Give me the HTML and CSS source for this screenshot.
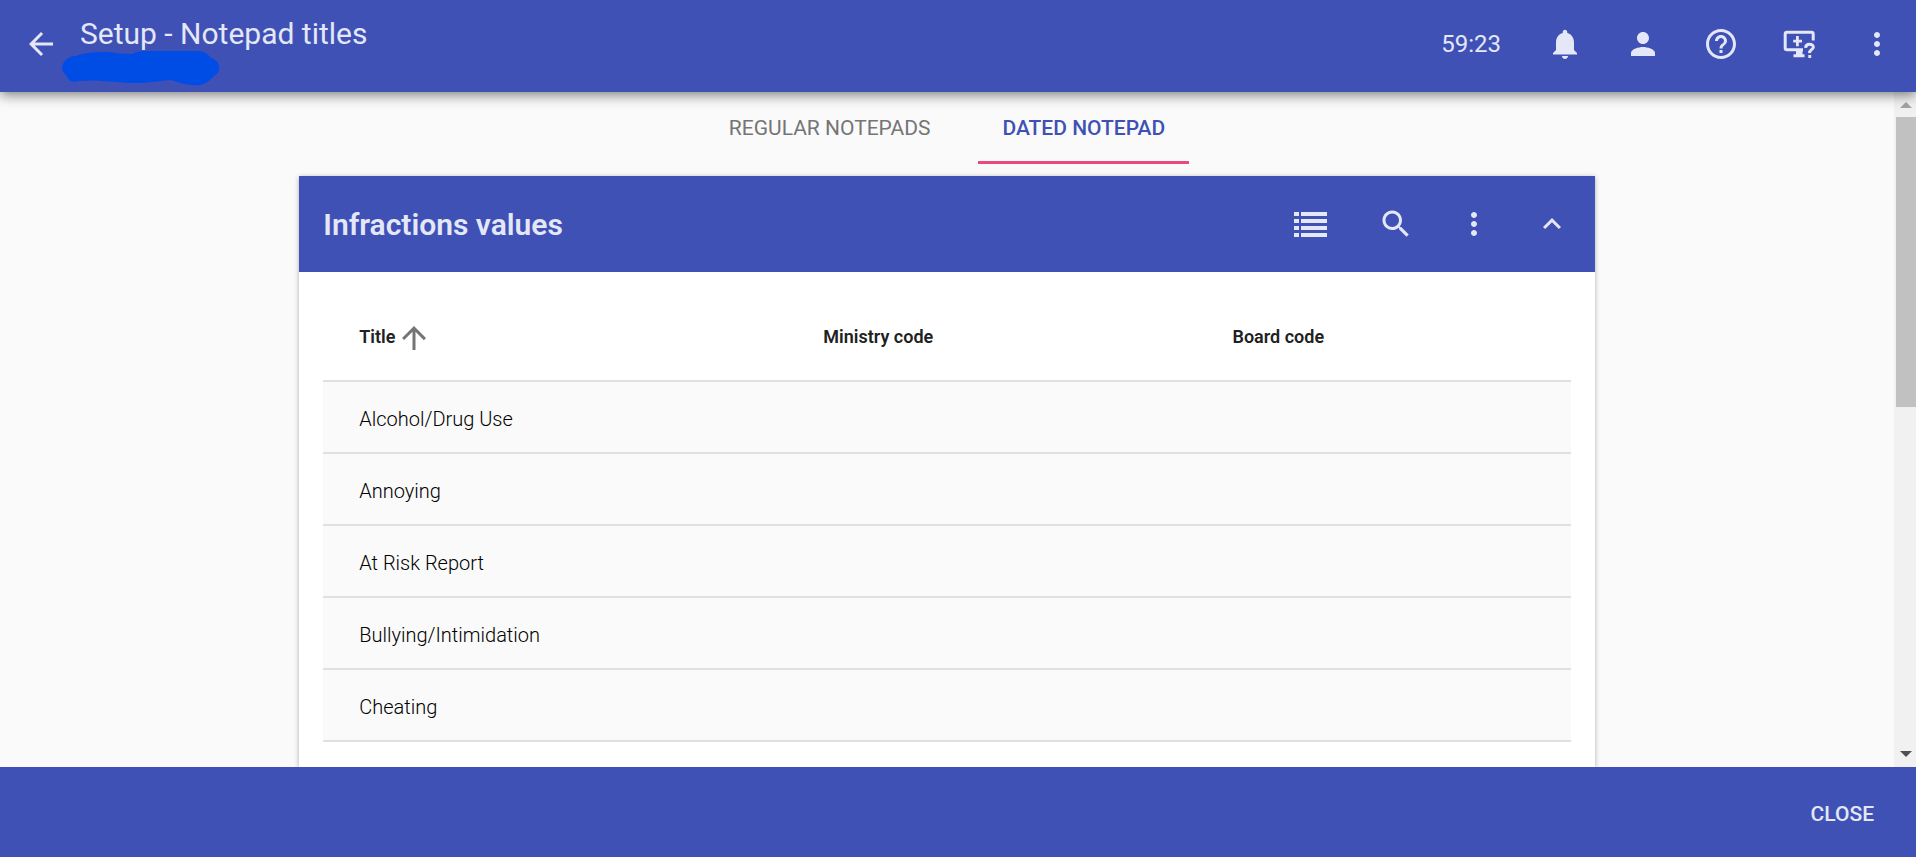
FILE: index.html
```html
<!DOCTYPE html>
<html lang="en">
<head>
<meta charset="utf-8">
<meta name="viewport" content="width=device-width, initial-scale=1">
<title>Setup - Notepad titles</title>
<link rel="stylesheet" href="styles.css">
</head>
<body>
<div class="app">
  <header class="topbar">
    <button class="icon-btn" type="button" aria-label="Back">
      <svg class="icon" viewBox="0 0 24 24"><path d="M20 11H7.83l5.59-5.59L12 4l-8 8 8 8 1.41-1.41L7.83 13H20v-2z"/></svg>
    </button>
    <div class="heading">
      <h1 class="page-title">Setup - Notepad titles</h1>
      <svg class="marker" viewBox="0 0 158 36" aria-hidden="true"><path d="M0 17C1 9 7 5 14 5C24 1 35 1 46 1C54 2 62 3 70 3C75 0 80 0 88 0H138C143 1 147 4 149 7C155 9 158 13 157 18C157 22 153 24 151 26C146 32 140 35 130 34C122 34 115 30 108 29C96 30 88 32 75 32C54 32 36 28 17 30C9 32 6 29 5 25C2 23 0 20 0 17Z"/></svg>
    </div>
    <span class="timer">59:23</span>
    <nav class="actions" aria-label="Account">
      <button class="icon-btn" type="button" aria-label="Notifications">
        <svg class="icon" viewBox="0 0 24 24"><path d="M12 22c1.100 0 2-.9 2-2h-4c0 1.100.89 2 2 2zm6-6v-5c0-3.070-1.640-5.640-4.500-6.320V4c0-.83-.67-1.500-1.500-1.500s-1.500.67-1.500 1.500v.68C7.630 5.360 6 7.920 6 11v5l-2 2v1h16v-1l-2-2z"/></svg>
      </button>
      <button class="icon-btn" type="button" aria-label="Profile">
        <svg class="icon" viewBox="0 0 24 24"><path d="M12 12c2.210 0 4-1.790 4-4s-1.790-4-4-4-4 1.790-4 4 1.790 4 4 4zm0 2c-2.670 0-8 1.340-8 4v2h16v-2c0-2.660-5.330-4-8-4z"/></svg>
      </button>
      <button class="icon-btn" type="button" aria-label="Help">
        <svg class="icon" viewBox="0 0 24 24"><path d="M11 18h2v-2h-2v2zm1-16C6.480 2 2 6.480 2 12s4.480 10 10 10 10-4.480 10-10S17.520 2 12 2zm0 18c-4.410 0-8-3.590-8-8s3.590-8 8-8 8 3.590 8 8-3.590 8-8 8zm0-14c-2.210 0-4 1.790-4 4h2c0-1.100.9-2 2-2s2 .9 2 2c0 2-3 1.750-3 5h2c0-2.250 3-2.500 3-5 0-2.210-1.790-4-4-4z"/></svg>
      </button>
      <button class="icon-btn" type="button" aria-label="Remote support">
        <svg class="icon" viewBox="0 0 36 36">
          <path class="stroke" d="M22 23.800H6Q4.200 23.800 4.200 22V8Q4.200 6.200 6 6.200H30.500Q32.200 6.200 32.200 8V14.500"/>
          <path d="M15 24.500H21.500V28.300H23.500V31.300H12.500V28.300H15ZM12.200 13.700H15V10H17.800V13.700H21V16.500H17.800V20.200H15V16.500H12.200Z"/>
          <path class="stroke" d="M24.600 21.800Q24.800 18.300 28.600 18.300T32.300 21.300Q32.300 22.600 30.400 23.800T28.700 27.200"/>
          <path d="M27.300 29H30.200V32H27.300Z"/>
        </svg>
      </button>
      <button class="icon-btn" type="button" aria-label="More options">
        <svg class="icon" viewBox="0 0 24 24"><path d="M12 8c1.100 0 2-.9 2-2s-.9-2-2-2-2 .9-2 2 .9 2 2 2zm0 2c-1.100 0-2 .9-2 2s.9 2 2 2 2-.9 2-2-.9-2-2-2zm0 6c-1.100 0-2 .9-2 2s.9 2 2 2 2-.9 2-2-.9-2-2-2z"/></svg>
      </button>
    </nav>
  </header>

  <div class="body">
    <main class="content">
      <nav class="tabs" aria-label="Notepads">
        <a class="tab" href="#regular">REGULAR NOTEPADS</a>
        <a class="tab tab-active" href="#dated" aria-current="page">DATED NOTEPAD</a>
      </nav>
      <section class="card">
        <div class="card-head">
          <h2 class="card-title">Infractions values</h2>
          <div class="actions">
            <button class="icon-btn icon-btn-wide" type="button" aria-label="List view">
              <svg class="icon" viewBox="0 0 36 36"><path d="M1 6H6V10H1ZM8 6H34V10H8ZM1 13H6V17H1ZM8 13H34V17H8ZM1 20H6V24H1ZM8 20H34V24H8ZM1 27H6V31H1ZM8 27H34V31H8Z"/></svg>
            </button>
            <button class="icon-btn" type="button" aria-label="Search">
              <svg class="icon" viewBox="0 0 24 24"><path d="M15.500 14h-.79l-.28-.27C15.410 12.590 16 11.110 16 9.500 16 5.910 13.090 3 9.500 3S3 5.910 3 9.500 5.910 16 9.500 16c1.610 0 3.090-.59 4.230-1.570l.27.28v.79l5 4.990L20.490 19l-4.990-5zm-6 0C7.010 14 5 11.990 5 9.500S7.010 5 9.500 5 14 7.010 14 9.500 11.990 14 9.500 14z"/></svg>
            </button>
            <button class="icon-btn" type="button" aria-label="More options">
              <svg class="icon" viewBox="0 0 24 24"><path d="M12 8c1.100 0 2-.9 2-2s-.9-2-2-2-2 .9-2 2 .9 2 2 2zm0 2c-1.100 0-2 .9-2 2s.9 2 2 2 2-.9 2-2-.9-2-2-2zm0 6c-1.100 0-2 .9-2 2s.9 2 2 2 2-.9 2-2-.9-2-2-2z"/></svg>
            </button>
            <button class="icon-btn" type="button" aria-label="Collapse">
              <svg class="icon" viewBox="0 0 24 24"><path d="M12 8l-6 6 1.410 1.410L12 10.830l4.590 4.580L18 14z"/></svg>
            </button>
          </div>
        </div>
        <div class="card-body">
          <table class="grid">
            <colgroup><col class="col-title"><col class="col-ministry"><col class="col-board"></colgroup>
            <thead>
              <tr>
                <th scope="col" aria-sort="ascending">Title<svg class="sort" viewBox="0 0 24 24"><path d="M4 12l1.410 1.410L11 7.830V20h2V7.830l5.580 5.590L20 12l-8-8-8 8z"/></svg></th>
                <th scope="col">Ministry code</th>
                <th scope="col">Board code</th>
              </tr>
            </thead>
            <tbody>
              <tr><td>Alcohol/Drug Use</td><td></td><td></td></tr>
              <tr><td>Annoying</td><td></td><td></td></tr>
              <tr><td>At Risk Report</td><td></td><td></td></tr>
              <tr><td>Bullying/Intimidation</td><td></td><td></td></tr>
              <tr><td>Cheating</td><td></td><td></td></tr>
            </tbody>
          </table>
        </div>
      </section>
    </main>
    <div class="scrollbar" aria-hidden="true">
      <svg class="scroll-arrow scroll-up" viewBox="0 0 20 25"><path d="M4 16L10 10L16 16Z"/></svg>
      <div class="track"><div class="thumb"></div></div>
      <svg class="scroll-arrow scroll-down" viewBox="0 0 20 25"><path d="M4 9H16L10 15Z"/></svg>
    </div>
  </div>

  <footer class="footer">
    <button class="close" type="button">CLOSE</button>
  </footer>
</div>
</body>
</html>
```

FILE: styles.css
```css
:root {
  --primary: #3f51b5;
  --on-primary: #e4e7f7;
  --page: #fafafa;
}

* {
  box-sizing: border-box;
}

body {
  margin: 0;
  font-family: Roboto, "Liberation Sans", sans-serif;
  font-size: 20px;
  color: #212121;
  background: var(--page);
}

button {
  padding: 0;
  border: 0;
  background: none;
  color: inherit;
  font: inherit;
  cursor: pointer;
}

.app {
  display: flex;
  flex-direction: column;
  height: 100vh;
}

/* Top bar */
.topbar {
  position: relative;
  z-index: 1;
  display: flex;
  align-items: center;
  flex: none;
  height: 92px;
  padding: 0 9px 4px 11px;
  background: var(--primary);
  color: var(--on-primary);
  box-shadow: 0 3px 12px rgba(0, 0, 0, 0.5);
}

.icon-btn {
  display: flex;
  align-items: center;
  justify-content: center;
  width: 60px;
  height: 60px;
}

.icon-btn-wide {
  width: 74px;
}

.icon {
  width: 36px;
  height: 36px;
  fill: currentColor;
}

.stroke {
  fill: none;
  stroke: currentColor;
  stroke-width: 3;
}

.heading {
  position: relative;
  flex: 1;
  align-self: flex-start;
  padding: 16px 0 0 9px;
}

.page-title {
  margin: 0;
  font-size: 30px;
  line-height: 36px;
  font-weight: 400;
}

.marker {
  position: absolute;
  left: -9px;
  top: 51px;
  width: 158px;
  height: 36px;
  fill: #004de6;
}

.timer {
  margin-right: 34px;
  font-size: 24px;
}

.actions {
  display: flex;
  gap: 18px;
}

/* Scrolling area */
.body {
  display: flex;
  flex: 1;
  min-height: 0;
}

.content {
  display: flex;
  flex-direction: column;
  flex: 1;
  overflow: hidden;
}

.tabs {
  display: flex;
  justify-content: center;
  gap: 24px;
  flex: none;
  margin-bottom: 12px;
}

.tab {
  height: 72px;
  padding: 0 24px;
  border-bottom: 3px solid transparent;
  color: #757575;
  font-size: 21px;
  line-height: 72px;
  text-decoration: none;
}

.tab-active {
  border-color: #e94b80;
  color: var(--primary);
  font-weight: 500;
}

.card {
  flex: 1 0 auto;
  width: 68.4%;
  margin: 0 auto;
  background: #fff;
  box-shadow: 0 1px 5px rgba(0, 0, 0, 0.3);
}

.card-head {
  display: flex;
  align-items: center;
  justify-content: space-between;
  height: 96px;
  padding: 0 13px 0 24px;
  background: var(--primary);
  color: var(--on-primary);
}

.card-title {
  margin: 0;
  font-size: 30px;
  font-weight: 600;
}

.card-body {
  padding: 24px;
}

.grid {
  width: 100%;
  border-collapse: separate;
  border-spacing: 0;
  table-layout: fixed;
}

.col-title {
  width: 37.2%;
}

.col-ministry {
  width: 32.8%;
}

.grid th,
.grid td {
  height: 72px;
  padding: 0 36px;
  border-bottom: 2px solid #e0e0e0;
  text-align: left;
}

.grid th {
  height: 86px;
  padding-top: 24px;
  font-size: 18px;
  font-weight: 600;
  vertical-align: baseline;
}

.grid td {
  padding-top: 4px;
  background: var(--page);
  color: #000;
  font-weight: 300;
}

.sort {
  width: 36px;
  height: 36px;
  margin-left: 1px;
  fill: #757575;
  vertical-align: middle;
}

/* Scrollbar */
.scrollbar {
  display: flex;
  flex-direction: column;
  width: 22px;
  padding-left: 2px;
  background: #f1f1f1;
}

.scroll-arrow {
  flex: none;
  width: 20px;
  height: 25px;
}

.scroll-up {
  fill: #a3a3a3;
}

.scroll-down {
  fill: #505050;
}

.track {
  flex: 1;
}

.thumb {
  height: 46.4%;
  background: #c1c1c1;
}

/* Footer */
.footer {
  display: flex;
  align-items: center;
  justify-content: flex-end;
  flex: none;
  height: 90px;
  padding: 4px 42px 0;
  background: var(--primary);
  color: var(--on-primary);
}

.close {
  height: 54px;
  font-size: 21px;
  font-weight: 500;
}
```
